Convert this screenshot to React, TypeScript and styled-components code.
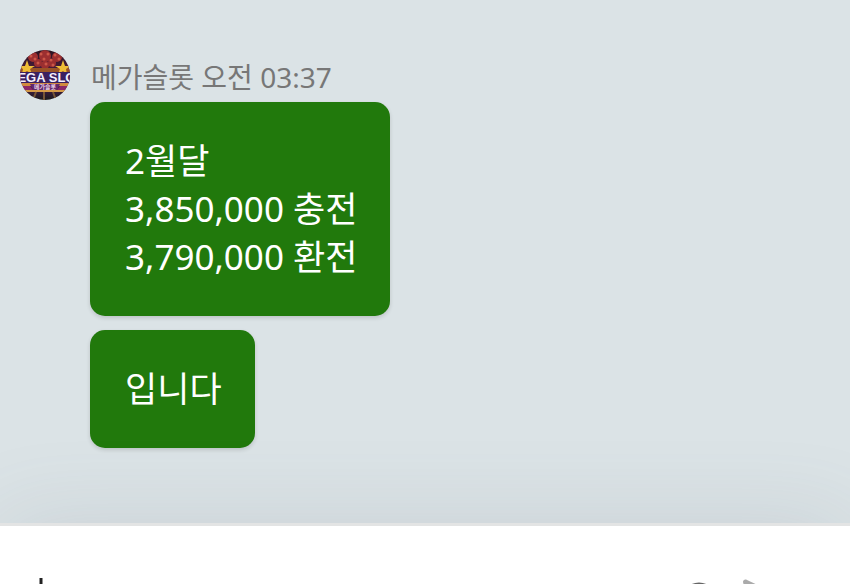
import React from 'react';
import styled, { createGlobalStyle } from "styled-components";


type MessageInfo = {
    id: number;
    lines: string[];
};

type MessageGroupInfo = {
    sender: string;
    time: string;
    messages: MessageInfo[];
};

const group: MessageGroupInfo = {
    sender: "메가슬롯",
    time: "오전 03:37",
    messages: [
        { id: 1, lines: ["2월달", "3,850,000 충전", "3,790,000 환전"] },
        { id: 2, lines: ["입니다"] },
    ],
};

const AvatarLogo = () => (
    <svg width="50" height="50" viewBox="0 0 50 50" role="img" aria-label="메가슬롯">
        <defs>
            <clipPath id="avatar-circle"><circle cx="25" cy="25" r="25" /></clipPath>
            <linearGradient id="avatar-bg" x1="0" y1="0" x2="0" y2="1">
                <stop offset="0" stopColor="#2a1420" />
                <stop offset="0.4" stopColor="#4a1c3c" />
                <stop offset="0.7" stopColor="#4a1c50" />
                <stop offset="1" stopColor="#1c1a1c" />
            </linearGradient>
        </defs>
        <g clipPath="url(#avatar-circle)">
            <rect width="50" height="50" fill="url(#avatar-bg)" />
            <g fill="#9c2f30">
                <circle cx="13" cy="7" r="5" />
                <circle cx="25" cy="6" r="6" />
                <circle cx="37" cy="7" r="5" />
                <circle cx="18" cy="13" r="4" />
                <circle cx="32" cy="13" r="4" />
                <circle cx="25" cy="15" r="4" />
            </g>
            <g fill="#cc5748">
                <circle cx="11" cy="6" r="1.5" />
                <circle cx="15" cy="9" r="1.5" />
                <circle cx="21" cy="4" r="1.5" />
                <circle cx="28" cy="4" r="1.5" />
                <circle cx="24" cy="9" r="1.5" />
                <circle cx="35" cy="5" r="1.5" />
                <circle cx="39" cy="9" r="1.5" />
                <circle cx="31" cy="10" r="1.5" />
                <circle cx="18" cy="13" r="1.5" />
                <circle cx="26" cy="14" r="1.5" />
                <circle cx="33" cy="15" r="1.5" />
            </g>
            <path d="M0 18h50v4H0z" fill="#9a5326" />
            <path d="M7 10l2 6h6l-5 3 2 5-5-3-5 3 1-5-4-3h6zM43 10l2 6h6l-5 3 1 5-4-3-5 3 2-5-5-3h6z" fill="#eebc35" />
            <path d="M0 22h50v11H0z" fill="#3b2060" />
            <path d="M0 33h50v3H0z" fill="#d18a3e" />
            <text x="25" y="32" textAnchor="middle" fill="#f4effc" stroke="#3b2060" strokeWidth="1" paintOrder="stroke" fontFamily="'Liberation Sans', sans-serif" fontWeight="bold" fontSize="13">MEGA SLOT</text>
            <path d="M10 34h30l-3 6H13z" fill="#63286d" />
            <text x="25" y="39" textAnchor="middle" fill="#e8cde2" fontFamily="'Noto Sans CJK KR', sans-serif" fontWeight="bold" fontSize="6">메가슬롯</text>
            <path d="M1 36h9l3 4H3zM49 36h-9l-3 4h10z" fill="#8c2868" />
            <path d="M3 40h44v2H3z" fill="#d49a48" />
            <path d="M16 42l-3 8M24 42v8M33 42l3 8" stroke="#785536" strokeWidth="2" />
        </g>
    </svg>
);

const PlusIcon = () => (
    <svg width="42" height="42" viewBox="0 0 42 42" fill="none" stroke="#222" strokeWidth="3" aria-hidden="true">
        <path d="M21 3v36M3 21h36" />
    </svg>
);

const SmileIcon = () => (
    <svg width="42" height="42" viewBox="0 0 42 42" fill="none" stroke="#666" strokeWidth="3" aria-hidden="true">
        <circle cx="21" cy="25" r="16" />
        <path d="M14 28c3 6 11 6 14 0M15 20v2M27 20v2" />
    </svg>
);

const SendIcon = () => (
    <svg width="42" height="42" viewBox="0 0 42 42" fill="#aaa" aria-hidden="true">
        <path d="M3 7c0-2 2-3 4-2l32 15c2 1 2 3 0 4L7 39c-2 1-4 0-4-2l3-12 18-3-18-3z" />
    </svg>
);

const App = () => {
    return <Page>
        <GlobalStyle />
        <Thread>
            <Avatar><AvatarLogo /></Avatar>
            <MessageGroup>
                <Meta>{group.sender} <time>{group.time}</time></Meta>
                {group.messages.map((message) => (
                    <Bubble key={`Message${message.id}`}>
                        {message.lines.map((line, idx) => <Line key={`Line${idx}`}>{line}</Line>)}
                    </Bubble>
                ))}
            </MessageGroup>
        </Thread>
        <Composer onSubmit={(e) => e.preventDefault()}>
            <IconButton type="button" aria-label="첨부"><PlusIcon /></IconButton>
            <MessageInput aria-label="메시지" />
            <IconButton type="button" aria-label="이모티콘"><SmileIcon /></IconButton>
            <IconButton type="submit" aria-label="보내기"><SendIcon /></IconButton>
        </Composer>
    </Page>
};

const GlobalStyle = createGlobalStyle`
    * {
        box-sizing: border-box;
    }

    body {
        margin: 0;
        background-color: white;
        font-family: "Noto Sans", "Noto Sans CJK KR", sans-serif;
    }
`;

const Page = styled.div`
    height: 100vh;
    overflow: hidden;
    background-color: white;
`;

const Thread = styled.main`
    display: flex;
    align-items: flex-start;
    gap: 20px;
    padding: 50px 20px 75px;
    background-color: #dbe3e6;
`;

const Avatar = styled.div`
    flex: none;
    width: 50px;
    height: 50px;

    svg {
        display: block;
    }
`;

const MessageGroup = styled.section`
    display: flex;
    flex-direction: column;
    align-items: flex-start;
    gap: 14px;
    min-width: 0;
`;

const Meta = styled.p`
    margin: 0 0 -14px;
    padding: 3px 0 1px 1px;
    font-size: 28px;
    line-height: 48px;
    color: #777;
`;

const Bubble = styled.article`
    padding: 35px 33px 35px 35px;
    border-radius: 15px;
    background-color: #21790c;
    color: white;
    box-shadow: 0 2px 4px rgba(0, 0, 0, 0.14);
`;

const Line = styled.p`
    margin: 0;
    font-size: 35px;
    line-height: 48px;
`;

const Composer = styled.form`
    position: relative;
    display: flex;
    align-items: center;
    gap: 20px;
    padding: 49px 68px 30px 20px;
    border-top: 3px solid #e3e4e4;
    background-color: white;
    box-shadow: 0 0 90px rgba(90, 100, 110, 0.14);
`;

const IconButton = styled.button`
    flex: none;
    padding: 0;
    border: none;
    background: none;

    svg {
        display: block;
    }
`;

const MessageInput = styled.input`
    flex: 1;
    min-width: 0;
    border: none;
    outline: none;
    background: none;
    font: inherit;
    font-size: 28px;
`;

export default App;
